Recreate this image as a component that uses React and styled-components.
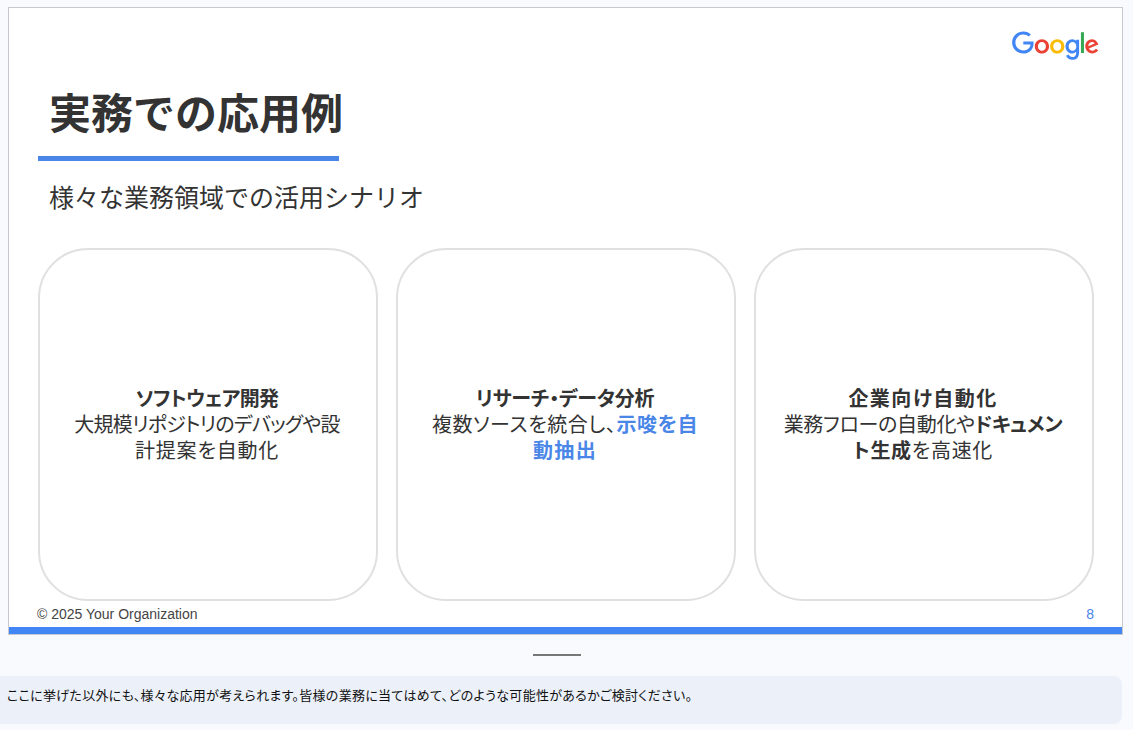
import React from 'react';
import styled, {createGlobalStyle} from 'styled-components';

const GlobalStyle = createGlobalStyle`
    html, body {
        margin: 0;
        padding: 0;
        background: #f9fafd;
    }
    body {
        font-family: "Noto Sans CJK JP", "Liberation Sans", sans-serif;
        color: #333;
    }
`;

const Page = styled.div`
    width: 1133px;
    height: 730px;
    overflow: hidden;
    padding-top: 7px;
    box-sizing: border-box;
`;

const Slide = styled.section`
    position: relative;
    margin-left: 8px;
    width: 1115px;
    height: 628px;
    box-sizing: border-box;
    border: 1px solid #c6cad0;
    background: #fff;
    display: flex;
    flex-direction: column;
`;

const Logo = styled.svg`
    position: absolute;
    top: 23px;
    right: 23px;
    width: 87px;
    height: 30px;
`;

const Title = styled.h1`
    margin: 0;
    padding: 73px 0 0 40px;
    font-size: 42px;
    line-height: 60px;
    font-weight: 700;
    color: #333;
`;

const Rule = styled.div`
    margin: 15px 0 0 29px;
    width: 301px;
    height: 5px;
    background: #4a86e8;
`;

const Subtitle = styled.h2`
    margin: 0;
    padding: 17px 0 0 40px;
    font-size: 25px;
    line-height: 36px;
    font-weight: 400;
    color: #333;
`;

const Cards = styled.div`
    display: grid;
    grid-template-columns: repeat(3, 340px);
    column-gap: 18px;
    margin: 34px 0 0 29px;
`;

const Card = styled.div`
    height: 353px;
    box-sizing: border-box;
    border: 2px solid #e0e0e0;
    border-radius: 50px;
    padding: 0 2px 2px 0;
    display: flex;
    flex-direction: column;
    justify-content: center;
    text-align: center;
    font-size: 20px;
    line-height: 26px;
    color: #333;
    font-feature-settings: "palt";
`;

const Line = styled.div`
    white-space: nowrap;
    font-weight: ${props => props.$bold ? 700 : 400};
    letter-spacing: ${props => props.$spacing || 0}px;
`;

const Strong = styled.strong`
    font-weight: 700;
    color: ${props => props.$accent ? '#4a86e8' : '#333'};
`;

const Footer = styled.div`
    flex: 1;
    display: flex;
    justify-content: space-between;
    align-items: center;
    padding: 0 28px 1px 28px;
    font-family: "Liberation Sans", Arial, sans-serif;
    font-size: 14px;
    color: #444;
`;

const PageNumber = styled.span`
    color: #4a86e8;
`;

const BottomBar = styled.div`
    height: 7px;
    background: #4285f4;
`;

const Divider = styled.div`
    width: 48px;
    height: 2px;
    margin: 19px 0 0 533px;
    background: #777;
`;

const Notes = styled.div`
    margin-top: 20px;
    width: 1122px;
    height: 48px;
    box-sizing: border-box;
    padding: 0 0 11px 7px;
    display: flex;
    align-items: center;
    border-radius: 0 8px 8px 0;
    background: #ebf0f9;
    font-size: 13px;
    letter-spacing: 0.3px;
    color: #111;
    font-feature-settings: "palt";
`;

const GoogleLogo = () => (
    <Logo viewBox="0 0 272 92">
        <path fill="#EA4335" d="M115.75 47.18c0 12.77-9.99 22.18-22.25 22.18s-22.25-9.41-22.25-22.18C71.25 34.32 81.24 25 93.5 25s22.25 9.32 22.25 22.18zm-9.74 0c0-7.98-5.79-13.44-12.51-13.44S80.99 39.2 80.99 47.18c0 7.9 5.79 13.44 12.51 13.44s12.51-5.55 12.51-13.44z"/>
        <path fill="#FBBC05" d="M163.75 47.18c0 12.77-9.99 22.18-22.25 22.18s-22.25-9.41-22.25-22.18c0-12.85 9.99-22.18 22.25-22.18s22.25 9.32 22.25 22.18zm-9.74 0c0-7.98-5.79-13.44-12.51-13.44s-12.51 5.46-12.51 13.44c0 7.9 5.79 13.44 12.51 13.44s12.51-5.55 12.51-13.44z"/>
        <path fill="#4285F4" d="M209.75 26.34v39.82c0 16.38-9.66 23.07-21.08 23.07-10.75 0-17.22-7.19-19.66-13.07l8.48-3.53c1.51 3.61 5.21 7.87 11.17 7.87 7.31 0 11.84-4.51 11.84-13v-3.19h-.34c-2.18 2.69-6.38 5.04-11.68 5.04-11.09 0-21.25-9.66-21.25-22.09 0-12.52 10.16-22.26 21.25-22.26 5.29 0 9.49 2.35 11.68 4.96h.34v-3.61h9.25zm-8.56 20.92c0-7.81-5.21-13.52-11.84-13.52-6.72 0-12.35 5.71-12.35 13.52 0 7.73 5.63 13.36 12.35 13.36 6.63 0 11.84-5.63 11.84-13.36z"/>
        <path fill="#34A853" d="M225 3v65h-9.5V3h9.5z"/>
        <path fill="#EA4335" d="M262.02 54.48l7.56 5.04c-2.44 3.61-8.32 9.83-18.48 9.83-12.6 0-22.01-9.74-22.01-22.18 0-13.19 9.49-22.18 20.92-22.18 11.51 0 17.14 9.16 18.98 14.11l1.01 2.52-29.65 12.28c2.27 4.45 5.8 6.72 10.75 6.72 4.96 0 8.4-2.44 10.92-6.14zm-23.27-7.98l19.82-8.23c-1.09-2.77-4.37-4.7-8.23-4.7-4.95 0-11.84 4.37-11.59 12.93z"/>
        <path fill="#4285F4" d="M35.29 41.41V32H67c.31 1.64.47 3.58.47 5.68 0 7.06-1.93 15.79-8.15 22.01-6.05 6.3-13.78 9.66-24.02 9.66C16.32 69.35.36 53.89.36 34.91.36 15.93 16.32.47 35.3.47c10.5 0 17.98 4.12 23.6 9.49l-6.64 6.64c-4.03-3.78-9.49-6.72-16.97-6.72-13.86 0-24.7 11.17-24.7 25.03 0 13.86 10.84 25.03 24.7 25.03 8.99 0 14.11-3.61 17.39-6.89 2.66-2.66 4.41-6.46 5.1-11.65l-22.49.01z"/>
    </Logo>
);

const App = () => {
    return (
        <Page>
            <GlobalStyle />
            <Slide>
                <GoogleLogo />
                <Title>実務での応用例</Title>
                <Rule />
                <Subtitle>様々な業務領域での活用シナリオ</Subtitle>
                <Cards>
                    <Card>
                        <Line $bold $spacing={-0.6}>ソフトウェア開発</Line>
                        <Line $spacing={-0.75}>大規模リポジトリのデバッグや設</Line>
                        <Line $spacing={0.8}>計提案を自動化</Line>
                    </Card>
                    <Card>
                        <Line $bold $spacing={-0.2}>リサーチ・データ分析</Line>
                        <Line $spacing={0.6}>複数ソースを統合し、<Strong $accent>示唆を自</Strong></Line>
                        <Line $spacing={1.3}><Strong $accent>動抽出</Strong></Line>
                    </Card>
                    <Card>
                        <Line $bold $spacing={1.4}>企業向け自動化</Line>
                        <Line $spacing={-0.3}>業務フローの自動化や<Strong>ドキュメン</Strong></Line>
                        <Line $spacing={0.7}><Strong>ト生成</Strong>を高速化</Line>
                    </Card>
                </Cards>
                <Footer>
                    <span>© 2025 Your Organization</span>
                    <PageNumber>8</PageNumber>
                </Footer>
                <BottomBar />
            </Slide>
            <Divider />
            <Notes>ここに挙げた以外にも、様々な応用が考えられます。皆様の業務に当てはめて、どのような可能性があるかご検討ください。</Notes>
        </Page>
    );
};

export default App;
